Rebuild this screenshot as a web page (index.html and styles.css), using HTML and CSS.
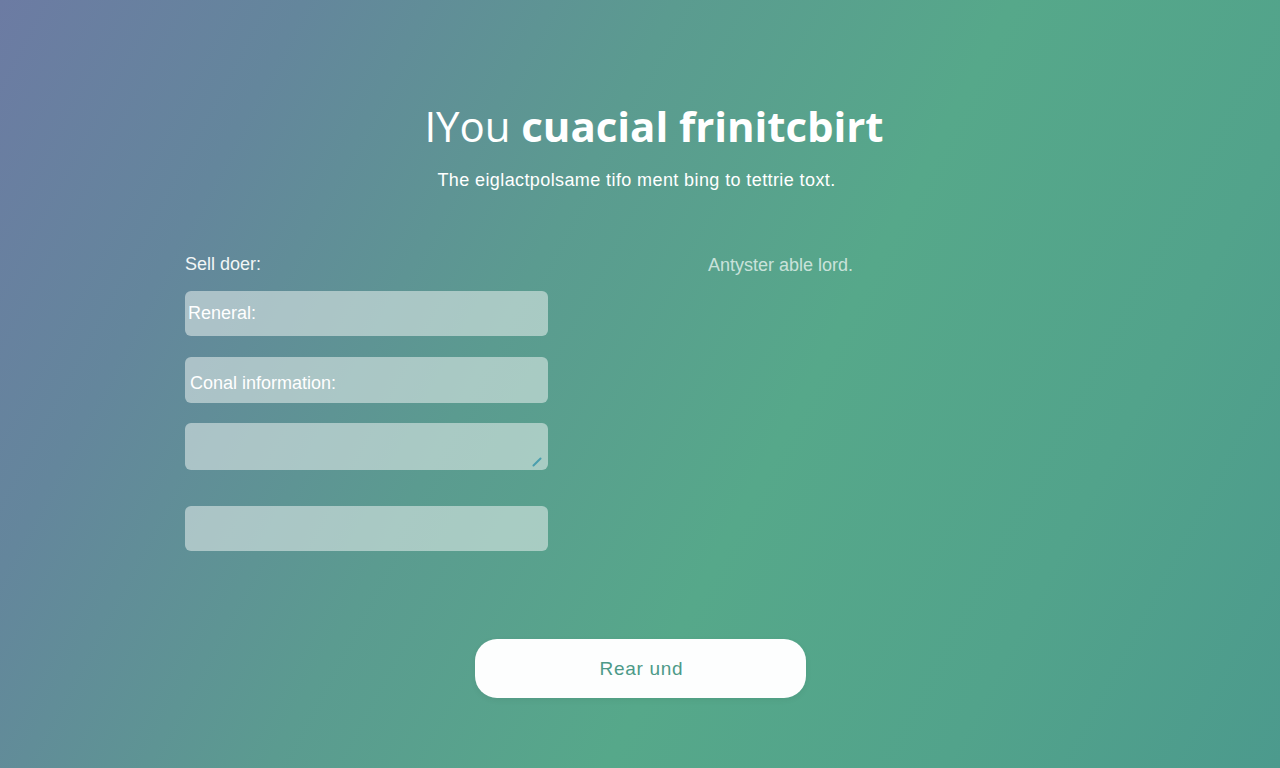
FILE: index.html
```html
<!DOCTYPE html>
<html lang="en">
<head>
    <meta charset="UTF-8">
    <meta name="viewport" content="width=device-width, initial-scale=1.0">
    <title>You cuacial frinitcbirt</title>
    <link rel="stylesheet" href="styles.css">
</head>
<body>
    <div class="header">
        <h1 class="title"><span class="light">IYou</span> cuacial frinitcbirt</h1>
        <p class="subtitle">The eiglactpolsame tifo ment bing to tettrie toxt.</p>
    </div>
    <form class="form" onsubmit="return false;">
        <div class="fields">
            <label class="label" for="renewal">Sell doer:</label>
            <input class="field" id="renewal" type="text" placeholder="Reneral:">
            <input class="field field-tall" type="text" placeholder="Conal information:">
            <div class="area-wrap">
                <textarea class="field area"></textarea>
                <span class="grip"></span>
            </div>
            <input class="field field-last" type="text">
        </div>
        <div class="aside">Antyster able lord.</div>
    </form>
    <div class="actions">
        <button class="button" type="button">Rear und</button>
    </div>
</body>
</html>
```

FILE: styles.css
```css
body {
    margin: 0;
    padding: 0;
    height: 100vh;
    overflow: hidden;
    font-family: 'Liberation Sans', Arial, sans-serif;
    color: #fff;
    background: linear-gradient(118deg, #6c7ba3 0%, #64869c 18%, #5b9b90 40%, #56a88a 60%, #52a38b 80%, #4c9a8d 100%);
}
.header {
    padding-top: 100px;
    text-align: center;
}
.title {
    margin: 0;
    padding-left: 28px;
    font-family: 'Open Sans', 'Liberation Sans', sans-serif;
    font-size: 42px;
    line-height: 52px;
    font-weight: 700;
    letter-spacing: -0.05px;
}
.title .light {
    font-weight: 400;
}
.subtitle {
    margin: 16px 0 0;
    padding-right: 7px;
    font-size: 18px;
    line-height: 24px;
    letter-spacing: 0.4px;
}
.form {
    display: grid;
    grid-template-columns: 363px 1fr;
    column-gap: 160px;
    padding-left: 185px;
    margin-top: 60px;
}
.fields {
    display: flex;
    flex-direction: column;
}
.label {
    font-size: 18px;
    line-height: 24px;
    margin-bottom: 15px;
    color: #f2f6f6;
}
.field {
    box-sizing: border-box;
    width: 363px;
    height: 45px;
    border: none;
    border-radius: 6px;
    background: rgba(234, 241, 239, 0.55);
    padding: 0 3px;
    font-family: 'Liberation Sans', Arial, sans-serif;
    font-size: 18px;
    color: #fff;
    outline: none;
}
.field::placeholder {
    color: #fff;
    opacity: 1;
}
.field-tall {
    height: 46px;
    margin-top: 21px;
    padding-top: 7px;
    padding-left: 5px;
}
.area-wrap {
    position: relative;
    margin-top: 20px;
    height: 47px;
}
.area {
    display: block;
    height: 47px;
    resize: none;
}
.grip {
    position: absolute;
    right: 5px;
    bottom: 7px;
    width: 12px;
    height: 2px;
    background: #4a9fae;
    border-radius: 1px;
    transform: rotate(-45deg);
}
.field-last {
    margin-top: 36px;
}
.aside {
    font-size: 18px;
    line-height: 24px;
    color: rgba(232, 244, 240, 0.8);
    padding-top: 1px;
}
.actions {
    display: flex;
    justify-content: center;
    margin-top: 88px;
    padding-left: 1px;
}
.button {
    width: 331px;
    height: 59px;
    border: none;
    border-radius: 22px;
    padding-left: 8px;
    background: #fdfefe;
    color: #4d9a88;
    font-family: 'Liberation Sans', Arial, sans-serif;
    font-size: 19px;
    letter-spacing: 0.7px;
    cursor: pointer;
    box-shadow: 0 2px 6px rgba(0, 0, 0, 0.06);
}
```
